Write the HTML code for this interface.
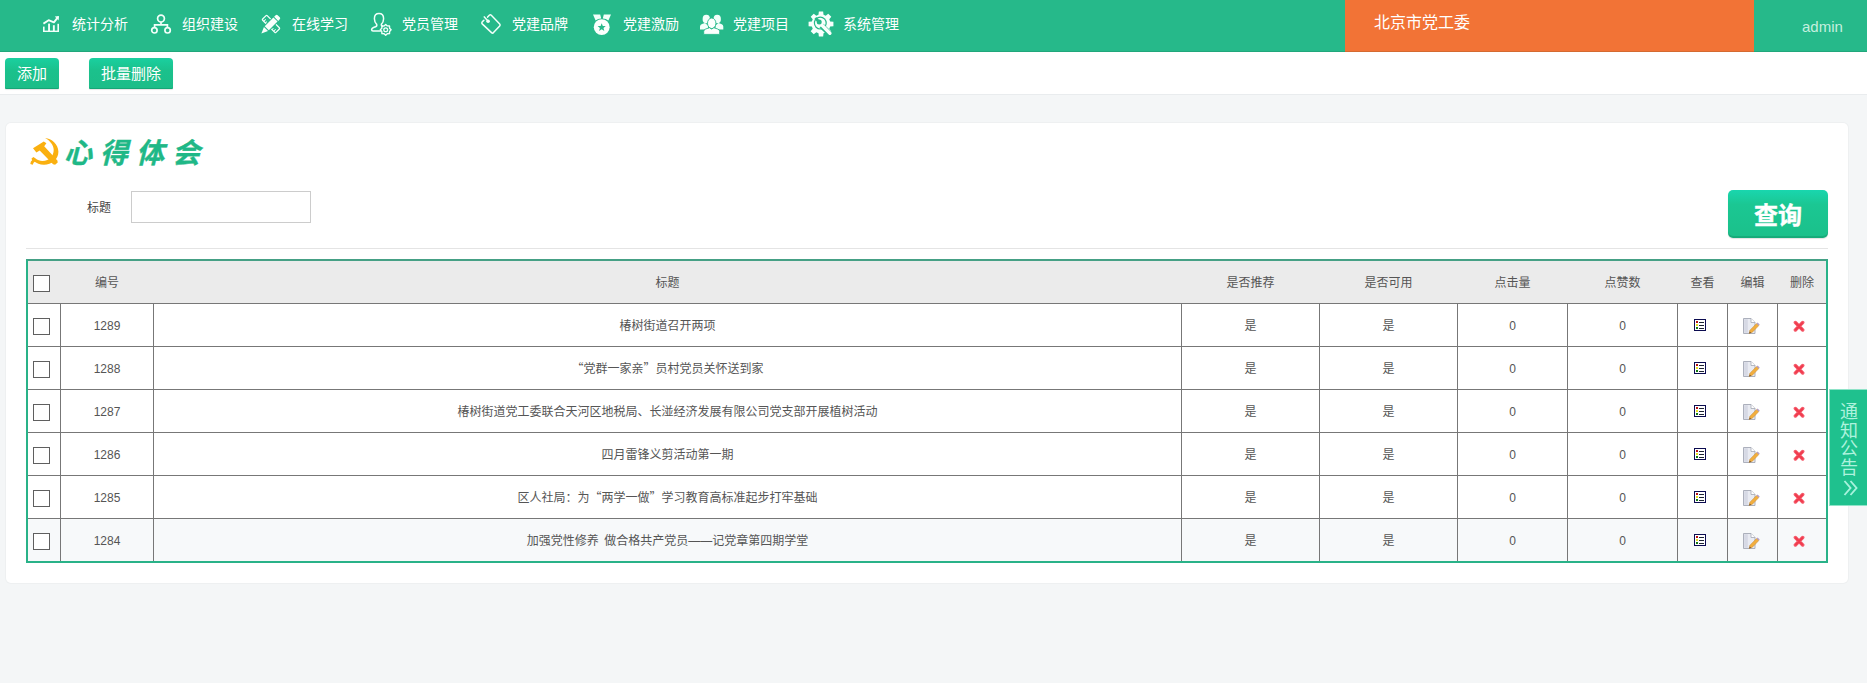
<!DOCTYPE html>
<html lang="zh-CN">
<head>
<meta charset="utf-8">
<title>心得体会</title>
<style>
*{box-sizing:border-box;margin:0;padding:0}
html,body{width:1867px;height:683px;overflow:hidden}
body{background:#f4f6f7;font-family:"Liberation Sans","Noto Sans CJK SC",sans-serif;color:#555;font-size:12px;position:relative}
.abs{position:absolute}
#nav{position:absolute;left:0;top:0;width:1867px;height:52px;background:#26b98a}
.ni{position:absolute;top:0;height:48px;line-height:48px;color:#fff;font-size:14px;white-space:nowrap}
#nav svg{position:absolute}
#org{position:absolute;left:1345px;top:0;width:409px;height:52px;background:#f27336;color:#fff;font-size:16px;line-height:46px;padding-left:29px}
#admin{position:absolute;left:1802px;top:16px;color:#c5efdf;font-size:15px;line-height:22px}
#toolbar{position:absolute;left:0;top:52px;width:1867px;height:43px;background:#fff;border-bottom:1px solid #e9ecee}
.btn{position:absolute;top:6px;height:31px;line-height:31px;color:#fff;font-size:15px;text-align:center;border-radius:4px 4px 1px 1px;background:linear-gradient(#1ad0a0,#1bc18c 40%,#1cbd88);box-shadow:inset 0 -1px 0 rgba(0,60,40,.18),0 1px 1px rgba(0,0,0,.1)}
#panel{position:absolute;left:6px;top:123px;width:1842px;height:460px;background:#fff;border-radius:5px;box-shadow:0 0 0 1px #eef0f1}
#title{position:absolute;left:64px;top:134px;-webkit-text-stroke:0.35px #1fb887;font-size:28px;line-height:40px;font-weight:700;font-style:italic;color:#1fb887;letter-spacing:8px;white-space:nowrap}
#lbl{position:absolute;left:87px;top:199px;font-size:12px;line-height:18px;color:#444}
#inp{position:absolute;left:131px;top:191px;width:180px;height:32px;border:1px solid #ccc;background:#fff}
#query{position:absolute;left:1728px;top:190px;width:100px;height:48px;border-radius:5px;background:linear-gradient(#19d6ae,#1bc793 30%,#1bc08a);box-shadow:inset 0 -2px 0 rgba(0,60,40,.16),0 1px 1px rgba(0,0,0,.12);color:#fff;font-size:24px;font-weight:700;-webkit-text-stroke:0.4px #fff;line-height:52px;text-align:center}
#hr{position:absolute;left:26px;top:248px;width:1802px;height:1px;background:#e4e4e4}
#tbl{position:absolute;left:26px;top:259px;width:1802px;height:304px;border:2px solid #29b288;border-top-color:#45a085;background:#fff}
.hd{position:absolute;left:0;top:0;width:1798px;height:43px;background:#ebebeb;border-bottom:1px solid #777}
.row{position:absolute;left:0;width:1798px;height:43px;border-bottom:1px solid #777}
.row:last-child{border-bottom:none;height:42px}
.c{position:absolute;top:0;height:100%;text-align:center;word-spacing:2px;line-height:44px;font-size:12px;color:#555;white-space:nowrap;border-left:1px solid #777}
.hd .c{border-left:none;line-height:44px;padding-left:1px}
.cb{position:absolute;left:5px;top:14px;width:17px;height:17px;border:1px solid #5f5f5f;background:#fff}
.ic{position:absolute}
.q{font-family:"Noto Sans CJK SC",sans-serif;line-height:0}
.sv{position:absolute;left:0;width:38px;height:20px;line-height:20px;font-size:18px;color:#aef2dd;text-align:center}
#side{position:absolute;left:1829px;top:389px;width:39px;height:117px;background:#1fc18e;border:1px solid #8fe3c8;color:#bfeedd;font-size:18px;line-height:18px;text-align:center}
</style>
</head>
<body>
<div id="nav">
<svg style="left:43px;top:16px" width="16" height="16" viewBox="0 0 16 16"><g fill="#f2fffa"><rect x="0" y="14.6" width="16" height="1.4"/><rect x="0" y="10.6" width="1.6" height="5"/><rect x="5.1" y="7.6" width="1.9" height="8"/><rect x="9.9" y="9.2" width="1.9" height="6"/><rect x="14.4" y="7.8" width="1.6" height="8"/></g><path d="M0.4 7.6 L5.6 4.2 L10.9 6.3 L15 1.2" fill="none" stroke="#f2fffa" stroke-width="1.9" stroke-linejoin="round"/><path d="M11.8 0.6 L16 0 L15.6 4.4 Z" fill="#f2fffa"/></svg>
<div class="ni" style="left:72px">统计分析</div>
<svg style="left:150px;top:14px" width="22" height="20" viewBox="0 0 22 20"><g fill="none" stroke="#f2fffa" stroke-width="1.7"><circle cx="11" cy="4.6" r="3.4"/><circle cx="4.4" cy="16.3" r="2.7"/><circle cx="17.6" cy="16.3" r="2.7"/><path d="M11 8 V10.8 M4.6 13.6 V10.8 H17.4 V13.6"/></g></svg>
<div class="ni" style="left:182px">组织建设</div>
<svg style="left:260px;top:13px" width="22" height="22" viewBox="0 0 22 22"><g transform="rotate(45 11 11)"><rect x="1.6" y="7.8" width="18.8" height="6.4" rx="0.8" fill="none" stroke="#f2fffa" stroke-width="1.3"/><path d="M4 14 v-2.6 M6.3 14 v-1.7 M15.7 14 v-1.7 M18 14 v-2.6" stroke="#f2fffa" stroke-width="1"/></g><g transform="rotate(-45 11 11)"><rect x="3.3" y="7.2" width="15" height="7.6" fill="#26b98a"/><g fill="#f8fffc"><path d="M-2.6 11 L3.9 8.1 V13.9 Z"/><rect x="5" y="8.1" width="12.3" height="5.8"/><path d="M18.3 8.1 H20.5 Q21.9 8.1 21.9 9.5 V12.5 Q21.9 13.9 20.5 13.9 H18.3 Z"/></g></g></svg>
<div class="ni" style="left:292px">在线学习</div>
<svg style="left:370px;top:12px" width="24" height="26" viewBox="0 0 24 26"><path d="M9 1.6 c3 0 4.6 2.3 4.6 5.2 c0 2.6 -1 4.3 -2.3 5.6 c-0.3 1 0.4 1.6 1.4 2 M6.7 12.4 c0.4 1.1 -0.2 1.9 -1.2 2.3 c-2.2 0.9 -3.9 1.3 -3.9 3 c0 0.8 0.5 1.2 1.4 1.2 h7.5 M6.7 12.4 c-1.3 -1.3 -2.3 -3 -2.3 -5.6 c0 -2.9 1.6 -5.2 4.6 -5.2" fill="none" stroke="#f2fffa" stroke-width="1.5" stroke-linecap="round" stroke-linejoin="round"/><g transform="translate(15.7 17.8)" fill="none" stroke="#f2fffa"><circle r="1.9" stroke-width="1.3"/><path d="M0 -5.4 L1.6 -3.9 L3.8 -3.8 L3.9 -1.6 L5.4 0 L3.9 1.6 L3.8 3.8 L1.6 3.9 L0 5.4 L-1.6 3.9 L-3.8 3.8 L-3.9 1.6 L-5.4 0 L-3.9 -1.6 L-3.8 -3.8 L-1.6 -3.9 Z" stroke-width="1.4" stroke-linejoin="round"/></g></svg>
<div class="ni" style="left:402px">党员管理</div>
<svg style="left:480px;top:13px" width="22" height="22" viewBox="0 0 22 22"><g fill="none" stroke="#f2fffa" stroke-width="1.5" stroke-linecap="round" stroke-linejoin="round"><path d="M7.6 4.1 L9.3 2.3 Q10.3 1.3 11.3 2.3 L19.7 11 Q20.6 12 19.7 13 L13.5 19.6 Q12.5 20.6 11.5 19.6 L2.2 10.9 Q1.3 9.9 2.2 8.9 L3.9 7.2"/><path d="M4.3 3.9 L7.3 7.3"/></g><circle cx="8.1" cy="8.2" r="1.8" fill="#f2fffa"/></svg>
<div class="ni" style="left:512px">党建品牌</div>
<svg style="left:592px;top:13px" width="20" height="24" viewBox="0 0 20 24"><path d="M1 1.6 H8.2 L9.2 5.6 Q6 5.8 3.6 7.6 Z M19 1.6 H11.8 L10.8 5.6 Q14 5.8 16.4 7.6 Z" fill="#f2fffa"/><circle cx="9.7" cy="14.2" r="7.9" fill="#fbfffd"/><path d="M9.7 10.2 L10.8 13 L13.8 13.1 L11.5 15 L12.3 17.9 L9.7 16.3 L7.1 17.9 L7.9 15 L5.6 13.1 L8.6 13 Z" fill="#26b98a"/></svg>
<div class="ni" style="left:623px">党建激励</div>
<svg style="left:699px;top:13px" width="26" height="23" viewBox="0 0 26 23"><g fill="#f2fffa"><ellipse cx="7.3" cy="6" rx="3.7" ry="4.3"/><ellipse cx="18.2" cy="6" rx="3.7" ry="4.3"/><path d="M1 16.5 V13.5 Q1 11.5 3 11 L6 10 Q8 12 9 12 V16.5 Z"/><path d="M24.3 16.5 V13.5 Q24.3 11.5 22.3 11 L19.5 10 Q17.5 12 16.5 12 V16.5 Z"/></g><g fill="#fbfffd" stroke="#26b98a" stroke-width="0.9"><ellipse cx="12.7" cy="10.3" rx="4.2" ry="5.3"/><path d="M4.7 21.4 V18.5 Q4.7 16.6 6.7 16 L10.6 14.7 Q12.7 17.4 14.8 14.7 L18.7 16 Q20.7 16.6 20.7 18.5 V21.4 Z"/></g></svg>
<div class="ni" style="left:733px">党建项目</div>
<svg style="left:808px;top:11px" width="27" height="27" viewBox="0 0 27 27"><path d="M10.47 3.84 L10.87 0.58 L15.13 0.58 L15.53 3.84 L17.68 4.73 L20.27 2.71 L23.29 5.73 L21.27 8.32 L22.16 10.47 L25.42 10.87 L25.42 15.13 L22.16 15.53 L21.27 17.68 L23.29 20.27 L20.27 23.29 L17.68 21.27 L15.53 22.16 L15.13 25.42 L10.87 25.42 L10.47 22.16 L8.32 21.27 L5.73 23.29 L2.71 20.27 L4.73 17.68 L3.84 15.53 L0.58 15.13 L0.58 10.87 L3.84 10.47 L4.73 8.32 L2.71 5.73 L5.73 2.71 L8.32 4.73 Z" fill="#f8fffc"/><circle cx="12.3" cy="12.1" r="6.5" fill="#26b98a"/><circle cx="12.3" cy="12.1" r="5.3" fill="#f8fffc"/><path d="M13.5 14.8 L22.6 23.5" stroke="#26b98a" stroke-width="5.6" stroke-linecap="butt"/><path d="M14 14.3 L21.9 22.2" stroke="#f8fffc" stroke-width="3.4" stroke-linecap="round"/><circle cx="11.2" cy="10.9" r="2.5" fill="#26b98a"/><path d="M11.2 10.9 L7.3 7" stroke="#26b98a" stroke-width="2.8"/></svg>
<div class="ni" style="left:843px">系统管理</div>
<div id="org">北京市党工委</div>
<div id="admin">admin</div>
</div>
<div class="abs" style="left:0;top:51px;width:1867px;height:1px;background:rgba(0,40,20,.12)"></div>
<div id="toolbar">
  <div class="btn" style="left:5px;width:54px">添加</div>
  <div class="btn" style="left:89px;width:84px">批量删除</div>
</div>
<div id="panel"></div>
<svg class="abs" style="left:29px;top:136px" width="31" height="31" viewBox="0 0 31 31"><g fill="#fab010"><path d="M16.1 1.9 C22.5 2.4 29.4 8 29.4 15.7 C29.4 19.5 27.8 22.5 25.8 24.5 C22.5 27.6 18 28.8 14.8 28.7 C10.5 28.6 7.7 27.2 5.7 25.7 L4.6 26.7 L3.7 28.8 L1.3 27.9 L1.9 25.5 L3.1 24.3 L2.5 22.5 L4.4 21.1 L6.3 22.3 C8.5 24 11 25 13.4 25 C17 25 20 23.8 21.8 21.8 C23.8 19.5 24.7 16.8 24.7 13.8 C24.7 9 20.5 4 16.1 1.9 Z"/><path d="M4 12.3 L14.8 5.6 L17.4 7.2 L15.2 10.3 L28.4 24.6 L28.7 26.6 L26.1 28.8 L24.1 28.3 L10.7 14.4 L7.4 16.5 Z"/></g></svg>
<div id="title">心得体会</div>
<div id="lbl">标题</div>
<div id="inp"></div>
<div id="query">查询</div>
<div id="hr"></div>
<div id="tbl">
<div class="hd"><div class="c" style="left:0;width:32px"><span class="cb"></span></div><div class="c" style="left:32px;width:93px">编号</div><div class="c" style="left:125px;width:1028px">标题</div><div class="c" style="left:1153px;width:138px">是否推荐</div><div class="c" style="left:1291px;width:138px">是否可用</div><div class="c" style="left:1429px;width:110px">点击量</div><div class="c" style="left:1539px;width:110px">点赞数</div><div class="c" style="left:1649px;width:50px">查看</div><div class="c" style="left:1699px;width:50px">编辑</div><div class="c" style="left:1749px;width:49px">删除</div></div>
<div class="row" style="top:43px"><div class="c" style="left:0;width:32px;border-left:none"><span class="cb"></span></div><div class="c" style="left:32px;width:93px">1289</div><div class="c" style="left:125px;width:1028px">椿树街道召开两项</div><div class="c" style="left:1153px;width:138px">是</div><div class="c" style="left:1291px;width:138px">是</div><div class="c" style="left:1429px;width:110px">0</div><div class="c" style="left:1539px;width:110px">0</div><div class="c" style="left:1649px;width:50px"><svg class="ic" style="left:16px;top:15px" width="12" height="12" viewBox="0 0 12 12" shape-rendering="crispEdges"><rect width="12" height="12" fill="#0b0b50"/><rect x="1" y="1" width="10" height="10" fill="#fff"/><rect x="2" y="2" width="2" height="2" fill="#b81414"/><rect x="2" y="5" width="2" height="2" fill="#e6e01c"/><rect x="2" y="8" width="2" height="2" fill="#127a12"/><path d="M5 3h5v1h-5zM5 6h5v1h-5zM5 9h5v1h-5z" fill="#1d2433"/></svg></div><div class="c" style="left:1699px;width:50px"><svg class="ic" style="left:15px;top:14px" width="17" height="17" viewBox="0 0 17 17"><path d="M0.5 0.5 H8 L12 4.5 V15.5 H0.5 Z" fill="#e9ebf2" stroke="#a4a8b4" stroke-width="0.9"/><path d="M8 0.5 V4.5 H12" fill="#fff" stroke="#a4a8b4" stroke-width="0.8"/><path d="M1.2 1.2 H4.8 V14.8 H1.2 Z" fill="#d6d9e4"/><path d="M6.2 15.4 L7 12.2 L13.6 5.5 L15.8 7.6 L9.3 14.3 Z" fill="#f2ae3e" stroke="#c48628" stroke-width="0.5"/><path d="M13.6 5.5 L14.6 4.5 L16.7 6.6 L15.8 7.6 Z" fill="#b49cc6"/><path d="M6.2 15.4 L6.7 13.4 L8.1 14.8 Z" fill="#6f5030"/></svg></div><div class="c" style="left:1749px;width:49px"><svg class="ic" style="left:15px;top:16px" width="13" height="13" viewBox="0 0 13 13"><path d="M2.4 2.6 L9.7 9.9 M9.7 2.6 L2.4 9.9" stroke="#f55a6a" stroke-width="3.5" stroke-linecap="round"/><path d="M2.8 3 L9.3 9.5 M9.3 3 L2.8 9.5" stroke="#f03c4e" stroke-width="1.8" stroke-linecap="round"/></svg></div></div>
<div class="row" style="top:86px"><div class="c" style="left:0;width:32px;border-left:none"><span class="cb"></span></div><div class="c" style="left:32px;width:93px">1288</div><div class="c" style="left:125px;width:1028px"><span class="q">“</span>党群一家亲<span class="q">”</span>员村党员关怀送到家</div><div class="c" style="left:1153px;width:138px">是</div><div class="c" style="left:1291px;width:138px">是</div><div class="c" style="left:1429px;width:110px">0</div><div class="c" style="left:1539px;width:110px">0</div><div class="c" style="left:1649px;width:50px"><svg class="ic" style="left:16px;top:15px" width="12" height="12" viewBox="0 0 12 12" shape-rendering="crispEdges"><rect width="12" height="12" fill="#0b0b50"/><rect x="1" y="1" width="10" height="10" fill="#fff"/><rect x="2" y="2" width="2" height="2" fill="#b81414"/><rect x="2" y="5" width="2" height="2" fill="#e6e01c"/><rect x="2" y="8" width="2" height="2" fill="#127a12"/><path d="M5 3h5v1h-5zM5 6h5v1h-5zM5 9h5v1h-5z" fill="#1d2433"/></svg></div><div class="c" style="left:1699px;width:50px"><svg class="ic" style="left:15px;top:14px" width="17" height="17" viewBox="0 0 17 17"><path d="M0.5 0.5 H8 L12 4.5 V15.5 H0.5 Z" fill="#e9ebf2" stroke="#a4a8b4" stroke-width="0.9"/><path d="M8 0.5 V4.5 H12" fill="#fff" stroke="#a4a8b4" stroke-width="0.8"/><path d="M1.2 1.2 H4.8 V14.8 H1.2 Z" fill="#d6d9e4"/><path d="M6.2 15.4 L7 12.2 L13.6 5.5 L15.8 7.6 L9.3 14.3 Z" fill="#f2ae3e" stroke="#c48628" stroke-width="0.5"/><path d="M13.6 5.5 L14.6 4.5 L16.7 6.6 L15.8 7.6 Z" fill="#b49cc6"/><path d="M6.2 15.4 L6.7 13.4 L8.1 14.8 Z" fill="#6f5030"/></svg></div><div class="c" style="left:1749px;width:49px"><svg class="ic" style="left:15px;top:16px" width="13" height="13" viewBox="0 0 13 13"><path d="M2.4 2.6 L9.7 9.9 M9.7 2.6 L2.4 9.9" stroke="#f55a6a" stroke-width="3.5" stroke-linecap="round"/><path d="M2.8 3 L9.3 9.5 M9.3 3 L2.8 9.5" stroke="#f03c4e" stroke-width="1.8" stroke-linecap="round"/></svg></div></div>
<div class="row" style="top:129px"><div class="c" style="left:0;width:32px;border-left:none"><span class="cb"></span></div><div class="c" style="left:32px;width:93px">1287</div><div class="c" style="left:125px;width:1028px">椿树街道党工委联合天河区地税局、长湴经济发展有限公司党支部开展植树活动</div><div class="c" style="left:1153px;width:138px">是</div><div class="c" style="left:1291px;width:138px">是</div><div class="c" style="left:1429px;width:110px">0</div><div class="c" style="left:1539px;width:110px">0</div><div class="c" style="left:1649px;width:50px"><svg class="ic" style="left:16px;top:15px" width="12" height="12" viewBox="0 0 12 12" shape-rendering="crispEdges"><rect width="12" height="12" fill="#0b0b50"/><rect x="1" y="1" width="10" height="10" fill="#fff"/><rect x="2" y="2" width="2" height="2" fill="#b81414"/><rect x="2" y="5" width="2" height="2" fill="#e6e01c"/><rect x="2" y="8" width="2" height="2" fill="#127a12"/><path d="M5 3h5v1h-5zM5 6h5v1h-5zM5 9h5v1h-5z" fill="#1d2433"/></svg></div><div class="c" style="left:1699px;width:50px"><svg class="ic" style="left:15px;top:14px" width="17" height="17" viewBox="0 0 17 17"><path d="M0.5 0.5 H8 L12 4.5 V15.5 H0.5 Z" fill="#e9ebf2" stroke="#a4a8b4" stroke-width="0.9"/><path d="M8 0.5 V4.5 H12" fill="#fff" stroke="#a4a8b4" stroke-width="0.8"/><path d="M1.2 1.2 H4.8 V14.8 H1.2 Z" fill="#d6d9e4"/><path d="M6.2 15.4 L7 12.2 L13.6 5.5 L15.8 7.6 L9.3 14.3 Z" fill="#f2ae3e" stroke="#c48628" stroke-width="0.5"/><path d="M13.6 5.5 L14.6 4.5 L16.7 6.6 L15.8 7.6 Z" fill="#b49cc6"/><path d="M6.2 15.4 L6.7 13.4 L8.1 14.8 Z" fill="#6f5030"/></svg></div><div class="c" style="left:1749px;width:49px"><svg class="ic" style="left:15px;top:16px" width="13" height="13" viewBox="0 0 13 13"><path d="M2.4 2.6 L9.7 9.9 M9.7 2.6 L2.4 9.9" stroke="#f55a6a" stroke-width="3.5" stroke-linecap="round"/><path d="M2.8 3 L9.3 9.5 M9.3 3 L2.8 9.5" stroke="#f03c4e" stroke-width="1.8" stroke-linecap="round"/></svg></div></div>
<div class="row" style="top:172px"><div class="c" style="left:0;width:32px;border-left:none"><span class="cb"></span></div><div class="c" style="left:32px;width:93px">1286</div><div class="c" style="left:125px;width:1028px">四月雷锋义剪活动第一期</div><div class="c" style="left:1153px;width:138px">是</div><div class="c" style="left:1291px;width:138px">是</div><div class="c" style="left:1429px;width:110px">0</div><div class="c" style="left:1539px;width:110px">0</div><div class="c" style="left:1649px;width:50px"><svg class="ic" style="left:16px;top:15px" width="12" height="12" viewBox="0 0 12 12" shape-rendering="crispEdges"><rect width="12" height="12" fill="#0b0b50"/><rect x="1" y="1" width="10" height="10" fill="#fff"/><rect x="2" y="2" width="2" height="2" fill="#b81414"/><rect x="2" y="5" width="2" height="2" fill="#e6e01c"/><rect x="2" y="8" width="2" height="2" fill="#127a12"/><path d="M5 3h5v1h-5zM5 6h5v1h-5zM5 9h5v1h-5z" fill="#1d2433"/></svg></div><div class="c" style="left:1699px;width:50px"><svg class="ic" style="left:15px;top:14px" width="17" height="17" viewBox="0 0 17 17"><path d="M0.5 0.5 H8 L12 4.5 V15.5 H0.5 Z" fill="#e9ebf2" stroke="#a4a8b4" stroke-width="0.9"/><path d="M8 0.5 V4.5 H12" fill="#fff" stroke="#a4a8b4" stroke-width="0.8"/><path d="M1.2 1.2 H4.8 V14.8 H1.2 Z" fill="#d6d9e4"/><path d="M6.2 15.4 L7 12.2 L13.6 5.5 L15.8 7.6 L9.3 14.3 Z" fill="#f2ae3e" stroke="#c48628" stroke-width="0.5"/><path d="M13.6 5.5 L14.6 4.5 L16.7 6.6 L15.8 7.6 Z" fill="#b49cc6"/><path d="M6.2 15.4 L6.7 13.4 L8.1 14.8 Z" fill="#6f5030"/></svg></div><div class="c" style="left:1749px;width:49px"><svg class="ic" style="left:15px;top:16px" width="13" height="13" viewBox="0 0 13 13"><path d="M2.4 2.6 L9.7 9.9 M9.7 2.6 L2.4 9.9" stroke="#f55a6a" stroke-width="3.5" stroke-linecap="round"/><path d="M2.8 3 L9.3 9.5 M9.3 3 L2.8 9.5" stroke="#f03c4e" stroke-width="1.8" stroke-linecap="round"/></svg></div></div>
<div class="row" style="top:215px"><div class="c" style="left:0;width:32px;border-left:none"><span class="cb"></span></div><div class="c" style="left:32px;width:93px">1285</div><div class="c" style="left:125px;width:1028px">区人社局：为<span class="q">“</span>两学一做<span class="q">”</span>学习教育高标准起步打牢基础</div><div class="c" style="left:1153px;width:138px">是</div><div class="c" style="left:1291px;width:138px">是</div><div class="c" style="left:1429px;width:110px">0</div><div class="c" style="left:1539px;width:110px">0</div><div class="c" style="left:1649px;width:50px"><svg class="ic" style="left:16px;top:15px" width="12" height="12" viewBox="0 0 12 12" shape-rendering="crispEdges"><rect width="12" height="12" fill="#0b0b50"/><rect x="1" y="1" width="10" height="10" fill="#fff"/><rect x="2" y="2" width="2" height="2" fill="#b81414"/><rect x="2" y="5" width="2" height="2" fill="#e6e01c"/><rect x="2" y="8" width="2" height="2" fill="#127a12"/><path d="M5 3h5v1h-5zM5 6h5v1h-5zM5 9h5v1h-5z" fill="#1d2433"/></svg></div><div class="c" style="left:1699px;width:50px"><svg class="ic" style="left:15px;top:14px" width="17" height="17" viewBox="0 0 17 17"><path d="M0.5 0.5 H8 L12 4.5 V15.5 H0.5 Z" fill="#e9ebf2" stroke="#a4a8b4" stroke-width="0.9"/><path d="M8 0.5 V4.5 H12" fill="#fff" stroke="#a4a8b4" stroke-width="0.8"/><path d="M1.2 1.2 H4.8 V14.8 H1.2 Z" fill="#d6d9e4"/><path d="M6.2 15.4 L7 12.2 L13.6 5.5 L15.8 7.6 L9.3 14.3 Z" fill="#f2ae3e" stroke="#c48628" stroke-width="0.5"/><path d="M13.6 5.5 L14.6 4.5 L16.7 6.6 L15.8 7.6 Z" fill="#b49cc6"/><path d="M6.2 15.4 L6.7 13.4 L8.1 14.8 Z" fill="#6f5030"/></svg></div><div class="c" style="left:1749px;width:49px"><svg class="ic" style="left:15px;top:16px" width="13" height="13" viewBox="0 0 13 13"><path d="M2.4 2.6 L9.7 9.9 M9.7 2.6 L2.4 9.9" stroke="#f55a6a" stroke-width="3.5" stroke-linecap="round"/><path d="M2.8 3 L9.3 9.5 M9.3 3 L2.8 9.5" stroke="#f03c4e" stroke-width="1.8" stroke-linecap="round"/></svg></div></div>
<div class="row" style="top:258px;background:#f7f9fa"><div class="c" style="left:0;width:32px;border-left:none"><span class="cb"></span></div><div class="c" style="left:32px;width:93px">1284</div><div class="c" style="left:125px;width:1028px">加强党性修养 做合格共产党员——记党章第四期学堂</div><div class="c" style="left:1153px;width:138px">是</div><div class="c" style="left:1291px;width:138px">是</div><div class="c" style="left:1429px;width:110px">0</div><div class="c" style="left:1539px;width:110px">0</div><div class="c" style="left:1649px;width:50px"><svg class="ic" style="left:16px;top:15px" width="12" height="12" viewBox="0 0 12 12" shape-rendering="crispEdges"><rect width="12" height="12" fill="#0b0b50"/><rect x="1" y="1" width="10" height="10" fill="#fff"/><rect x="2" y="2" width="2" height="2" fill="#b81414"/><rect x="2" y="5" width="2" height="2" fill="#e6e01c"/><rect x="2" y="8" width="2" height="2" fill="#127a12"/><path d="M5 3h5v1h-5zM5 6h5v1h-5zM5 9h5v1h-5z" fill="#1d2433"/></svg></div><div class="c" style="left:1699px;width:50px"><svg class="ic" style="left:15px;top:14px" width="17" height="17" viewBox="0 0 17 17"><path d="M0.5 0.5 H8 L12 4.5 V15.5 H0.5 Z" fill="#e9ebf2" stroke="#a4a8b4" stroke-width="0.9"/><path d="M8 0.5 V4.5 H12" fill="#fff" stroke="#a4a8b4" stroke-width="0.8"/><path d="M1.2 1.2 H4.8 V14.8 H1.2 Z" fill="#d6d9e4"/><path d="M6.2 15.4 L7 12.2 L13.6 5.5 L15.8 7.6 L9.3 14.3 Z" fill="#f2ae3e" stroke="#c48628" stroke-width="0.5"/><path d="M13.6 5.5 L14.6 4.5 L16.7 6.6 L15.8 7.6 Z" fill="#b49cc6"/><path d="M6.2 15.4 L6.7 13.4 L8.1 14.8 Z" fill="#6f5030"/></svg></div><div class="c" style="left:1749px;width:49px"><svg class="ic" style="left:15px;top:16px" width="13" height="13" viewBox="0 0 13 13"><path d="M2.4 2.6 L9.7 9.9 M9.7 2.6 L2.4 9.9" stroke="#f55a6a" stroke-width="3.5" stroke-linecap="round"/><path d="M2.8 3 L9.3 9.5 M9.3 3 L2.8 9.5" stroke="#f03c4e" stroke-width="1.8" stroke-linecap="round"/></svg></div></div>
</div>
<div id="side"><div class="sv" style="top:12px">通</div><div class="sv" style="top:30.5px">知</div><div class="sv" style="top:49px">公</div><div class="sv" style="top:67.5px">告</div><svg class="abs" style="left:12px;top:90px" width="16" height="16" viewBox="0 0 16 16"><path d="M2.5 1 L8.5 8 L2.5 15 M8.5 1 L14.5 8 L8.5 15" fill="none" stroke="#a8f2dc" stroke-width="1.9"/></svg></div>
</body>
</html>
